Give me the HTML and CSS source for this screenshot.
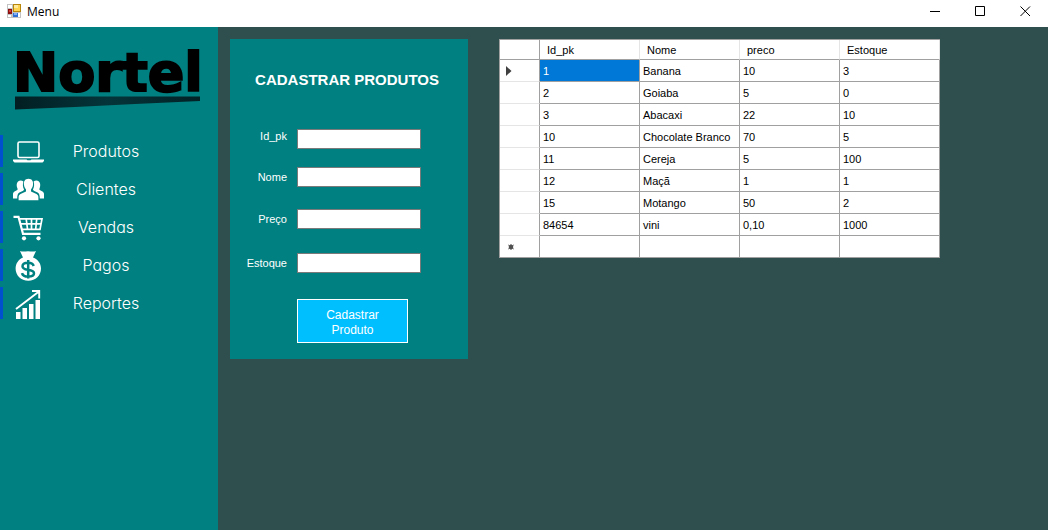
FILE: index.html
```html
<!DOCTYPE html>
<html lang="pt-BR">
<head>
<meta charset="utf-8">
<title>Menu</title>
<link rel="stylesheet" href="styles.css">
</head>
<body>
<header class="titlebar">
  <svg class="app-icon" width="14" height="14" viewBox="0 0 14 14" aria-hidden="true">
    <path fill="#c3c3c3" d="M0 0h14v14H0z"/>
    <path fill="#fff" d="M1 1h4v3H1zM1 11h3v2H1zM6 9h7v4H6z"/>
    <path fill="#b8860b" d="M6 0h8v8H6z"/><path fill="#ffd34e" d="M7 1h6v6H7z"/><path fill="#ffe99a" d="M7 1h4v3H7z"/>
    <path fill="#8c1010" d="M1 5h4v5H1z"/><path fill="#d43c35" d="M2 6h2v2H2z"/>
    <path fill="#2f6fd6" d="M6 9h5v4H6z"/><path fill="#7fb0f5" d="M7 9h3v2H7z"/>
  </svg>
  <h1 class="title">Menu</h1>
  <div class="window-controls">
    <button class="window-button" type="button" aria-label="Minimizar"><svg width="11" height="11" viewBox="0 0 11 11"><path d="M0 5.500h10"/></svg></button>
    <button class="window-button" type="button" aria-label="Maximizar"><svg width="11" height="11" viewBox="0 0 11 11"><path d="M.5.5h9v9h-9z"/></svg></button>
    <button class="window-button" type="button" aria-label="Fechar"><svg width="11" height="11" viewBox="0 0 11 11"><path d="M.5.5l9.500 9.500M10 .5L.5 10"/></svg></button>
  </div>
</header>
<div class="workspace">
  <aside class="sidebar">
    <div class="logo">
      <span class="logo-name">Nortel</span>
      <svg class="logo-swoosh" width="186" height="14" viewBox="0 0 186 14" aria-hidden="true">
        <defs><linearGradient id="swoosh" x1="0" x2="1"><stop offset="0" stop-color="#021f23"/><stop offset=".5" stop-color="#04353a"/><stop offset="1" stop-color="#022226"/></linearGradient></defs>
        <path fill="url(#swoosh)" d="M0 0.500H185V5L120 8L60 11L0 13.500Z"/>
      </svg>
    </div>
    <nav class="nav">
      <button class="nav-item" type="button">
        <svg class="nav-icon" viewBox="0 0 32 32" aria-hidden="true"><rect x="5" y="7" width="21" height="15.500" rx="1.500" fill="none" stroke="#fff" stroke-width="1.600"/><path fill="#fff" d="M0 24.500h13.500l1 .8h3l1-.8H31V26l-1.500 1.500h-28L0 26z"/></svg>
        <span class="nav-label">Produtos</span>
      </button>
      <button class="nav-item" type="button">
        <svg class="nav-icon" viewBox="0 0 32 32" aria-hidden="true"><g fill="#fff"><path d="M7.500 7.500c1.200 0 2.200.4 2.900 1.100-.9 2.700-.6 5.800.7 8l-.9 1.100-3.800 1.800C4.900 20.300 4.200 22 4.200 25.500H0v-4.200c0-1.500.7-2.300 2-3l2.300-1.300c.6-.5.300-1.300-.1-2.300C3 11.500 4.100 7.500 7.500 7.500zM23.500 7.500c-1.200 0-2.200.4-2.900 1.100.9 2.700.6 5.800-.7 8l.9 1.100 3.800 1.800c1.500.8 2.200 2.500 2.200 6H31v-4.200c0-1.500-.7-2.300-2-3L26.700 17c-.6-.5-.3-1.300.1-2.300 1.200-3.200.1-7.200-3.300-7.200z"/><path d="M15.500 5.700c3.700 0 5.100 3 4.500 6.300-.3 2-1.100 3.500-2 4.400v2l5.500 2.600c1.500.8 1.900 1.900 1.900 3.400v2.800H5.600v-2.800c0-1.500.4-2.600 1.900-3.400L13 18.400v-2c-.9-.9-1.700-2.400-2-4.400-.6-3.300.8-6.300 4.500-6.300z"/></g></svg>
        <span class="nav-label">Clientes</span>
      </button>
      <button class="nav-item" type="button">
        <svg class="nav-icon" viewBox="0 0 32 32" aria-hidden="true"><g fill="none" stroke="#fff" stroke-width="1.700"><path d="M.5 5.800h5l4.500 17h17.500" stroke-width="2.200"/><path d="M6.300 7.800h22.700l-2 10.500H9.200M7.500 12.800h20.300M13.200 8l1.300 10M18.500 8v10M23.700 8l-1 10"/></g><circle cx="11" cy="27.300" r="2.100" fill="#fff"/><circle cx="25.500" cy="27.300" r="2.100" fill="#fff"/></svg>
        <span class="nav-label">Vendas</span>
      </button>
      <button class="nav-item" type="button">
        <svg class="nav-icon" viewBox="0 0 32 32" aria-hidden="true"><path fill="#fff" d="M7 2c3 1 5 .2 8 .2s5 .8 8-.2l-3 6.500c5 2 8 6 8 11 0 7-5.400 12.300-12.700 12.300S2.600 26.500 2.600 19.500c0-5 2.900-9 7.400-11z"/><path d="M20.700 17c-.7-2.200-2.900-3.300-5.700-3.300-3.300 0-5.500 1.300-5.500 3.500 0 2.500 2.300 3.100 5.500 3.600s6 1.200 6 3.500c0 2.100-2.500 3.300-5.900 3.300-3.200 0-5.500-1.200-6.100-3.500M15.200 11v18.500" fill="none" stroke="#008080" stroke-width="2.500"/></svg>
        <span class="nav-label">Pagos</span>
      </button>
      <button class="nav-item" type="button">
        <svg class="nav-icon" viewBox="0 0 32 32" aria-hidden="true"><path fill="#fff" d="M3 25h4.500v7H3zM9.500 21H14v11H9.500zM16 17h4.500v15H16zM22.500 13H27v19h-4.500z"/><path d="M3 22L26 4.500M19 4h7.200v7.500" fill="none" stroke="#fff" stroke-width="1.900"/></svg>
        <span class="nav-label">Reportes</span>
      </button>
    </nav>
  </aside>
  <main class="content">
    <form class="product-form">
      <h2 class="form-title">CADASTRAR PRODUTOS</h2>
      <div class="fields">
        <label class="field-label field-label-first" for="id">Id_pk</label><input class="field-input" id="id" type="text">
        <label class="field-label" for="nome">Nome</label><input class="field-input" id="nome" type="text">
        <label class="field-label" for="preco">Preço</label><input class="field-input" id="preco" type="text">
        <label class="field-label" for="estoque">Estoque</label><input class="field-input" id="estoque" type="text">
      </div>
      <button class="submit" type="button">Cadastrar Produto</button>
    </form>
    <table class="grid">
      <thead><tr><th class="corner"></th><th>Id_pk</th><th>Nome</th><th>preco</th><th>Estoque</th></tr></thead>
      <tbody>
        <tr><th><svg class="row-mark" width="6" height="10" viewBox="0 0 6 10" aria-hidden="true"><path fill="#404040" d="M0 0l5.500 5L0 10z"/></svg></th><td class="selected">1</td><td>Banana</td><td>10</td><td>3</td></tr>
        <tr><th></th><td>2</td><td>Goiaba</td><td>5</td><td>0</td></tr>
        <tr><th></th><td>3</td><td>Abacaxi</td><td>22</td><td>10</td></tr>
        <tr><th></th><td>10</td><td>Chocolate Branco</td><td>70</td><td>5</td></tr>
        <tr><th></th><td>11</td><td>Cereja</td><td>5</td><td>100</td></tr>
        <tr><th></th><td>12</td><td>Maçã</td><td>1</td><td>1</td></tr>
        <tr><th></th><td>15</td><td>Motango</td><td>50</td><td>2</td></tr>
        <tr><th></th><td>84654</td><td>vini</td><td>0,10</td><td>1000</td></tr>
        <tr><th class="new-row"><svg class="row-mark" width="6" height="6" viewBox="0 0 6 6" aria-hidden="true"><circle cx="3" cy="3" r="2.300" fill="#505050"/><path stroke="#505050" stroke-width="1" d="M3 0v6M.3 1l5.400 4M5.700 1L.3 5"/></svg></th><td></td><td></td><td></td><td></td></tr>
      </tbody>
    </table>
  </main>
</div>
</body>
</html>
```

FILE: styles.css
```css
* { box-sizing: border-box; }

body {
  margin: 0;
  min-height: 100vh;
  display: flex;
  flex-direction: column;
  background: #2f4f4f;
  font-family: "Liberation Sans", Arial, sans-serif;
  font-size: 11px;
}

button { font: inherit; border: 0; padding: 0; }

.titlebar {
  display: flex;
  align-items: center;
  height: 27px;
  padding-left: 7px;
  background: #fff;
}
.app-icon { margin-bottom: 5px; }
.title {
  margin: 0 0 3px 6px;
  font: 12px/16px "Open Sans", "Noto Sans", sans-serif;
  color: #000;
}
.window-controls { display: flex; margin-left: auto; align-self: stretch; }
.window-button {
  display: grid;
  place-items: center;
  width: 45px;
  padding-bottom: 4px;
  background: none;
}
.window-button svg { fill: none; stroke: #000; stroke-width: 1; }

.workspace { display: flex; flex: 1; }

.sidebar {
  flex: 0 0 218px;
  background: #008080;
}
.logo {
  display: flex;
  flex-direction: column;
  height: 108px;
  padding: 22px 0 0 13px;
}
.logo-name {
  font: 700 54px/47px "DejaVu Sans", sans-serif;
  -webkit-text-stroke: 2px #000;
  color: #000;
}
.logo-swoosh { margin-left: 2px; }
.nav { display: flex; flex-direction: column; gap: 6px; }
.nav-item {
  display: flex;
  align-items: center;
  height: 32px;
  padding-left: 10px;
  border-left: 3px solid #0050d0;
  background: none;
  color: #fff;
}
.nav-icon { width: 32px; height: 32px; }
.nav-label {
  width: 122px;
  font: 300 16px/20px Inter, Lato, sans-serif;
  font-feature-settings: "cv11";
  text-align: center;
}

.content {
  flex: 1;
  display: flex;
  align-items: flex-start;
  gap: 31px;
  padding: 12px;
}

.product-form {
  flex: 0 0 238px;
  padding: 32px 0 16px;
  background: #008080;
  color: #fff;
}
.form-title {
  margin: 0 0 40px;
  padding-right: 4px;
  font-size: 15px;
  line-height: 18px;
  text-align: center;
}
.fields {
  display: grid;
  grid-template-columns: 57px 124px;
  grid-template-rows: 38px 42px 44px 20px;
  column-gap: 10px;
  align-items: start;
}
.field-label { line-height: 20px; text-align: right; }
.field-label-first { line-height: 14px; }
.field-input {
  width: 100%;
  height: 20px;
  padding: 0 2px;
  border: 1px solid #7a7a7a;
  background: #fff;
  font: inherit;
}
.submit {
  display: block;
  width: 111px;
  height: 44px;
  margin: 26px 0 0 67px;
  padding: 3px 20px 0;
  border: 1px solid #fff;
  background: #00bfff;
  color: #fff;
  font-size: 12px;
  line-height: 15px;
}

.grid {
  width: 441px;
  table-layout: fixed;
  border-collapse: separate;
  border-spacing: 0;
  border: solid #a0a0a0;
  border-width: 1px 0 0 1px;
  background: #fff;
  color: #000;
}
.grid th, .grid td {
  height: 22px;
  padding: 1px 3px 0;
  border: solid #a0a0a0;
  border-width: 0 1px 1px 0;
  font-weight: 400;
  line-height: 14px;
  text-align: left;
  vertical-align: middle;
}
.grid thead th { height: 20px; padding: 1px 7px 0; border-right-color: #e5e5e5; }
.grid thead .corner { width: 40px; border-right-color: #a0a0a0; }
.grid tbody th { padding: 1px 6px 0; border-bottom-color: #e5e5e5; }
.grid tbody .new-row { padding-left: 8px; border-bottom-color: #a0a0a0; }
.grid .selected { background: #0078d7; color: #fff; }
.row-mark { display: block; }
```
